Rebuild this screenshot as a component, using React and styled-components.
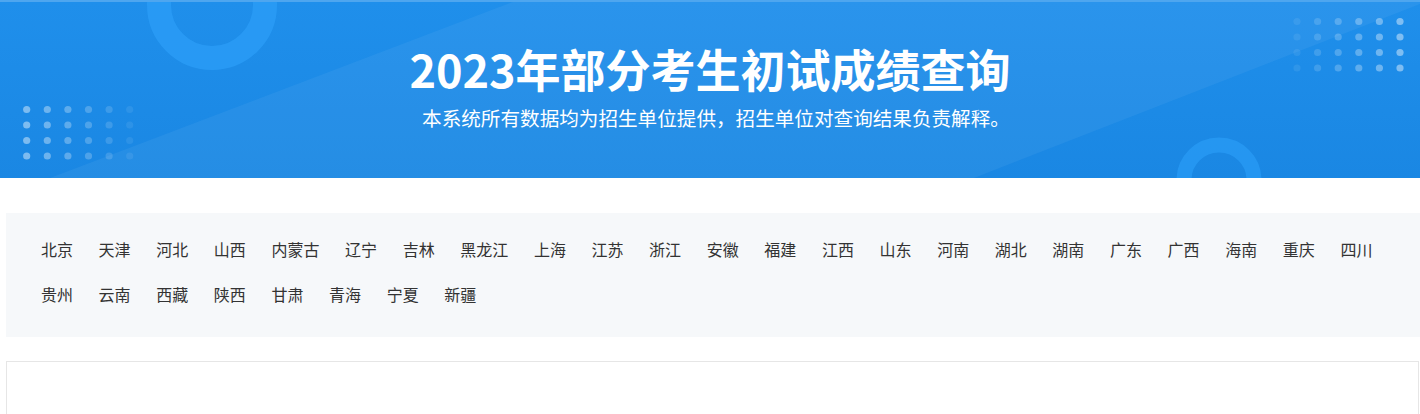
import React from 'react';
import styled, { createGlobalStyle } from 'styled-components';

const GlobalStyle = createGlobalStyle`
  body {
    margin: 0;
    background: #ffffff;
    font-family: "Microsoft YaHei", "Noto Sans CJK SC", "Noto Sans", sans-serif;
  }
`;

const provinces = [
  '北京', '天津', '河北', '山西', '内蒙古', '辽宁', '吉林', '黑龙江',
  '上海', '江苏', '浙江', '安徽', '福建', '江西', '山东', '河南',
  '湖北', '湖南', '广东', '广西', '海南', '重庆', '四川', '贵州',
  '云南', '西藏', '陕西', '甘肃', '青海', '宁夏', '新疆',
];

const Banner = styled.header`
  position: relative;
  height: 178px;
  overflow: hidden;
  background: linear-gradient(180deg, #1f8feb 0%, #1a87e3 100%);
  border-top: 2px solid #4ea6ef;
  box-sizing: border-box;
  display: flex;
  flex-direction: column;
  align-items: center;
  color: #ffffff;
`;

const Decor = styled.svg`
  position: absolute;
  inset: 0;
  width: 100%;
  height: 100%;
`;

const Title = styled.h1`
  position: relative;
  margin: 42px 0 0;
  font-size: 45px;
  line-height: 50px;
  font-weight: 700;
`;

const Subtitle = styled.p`
  position: relative;
  margin: 12px 0 0 12px;
  font-size: 19.6px;
  line-height: 24px;
`;

const RegionPanel = styled.nav`
  margin: 35px 0 0 6px;
  padding: 14px 10px 20px 35px;
  background: #f6f8fa;
`;

const RegionList = styled.ul`
  list-style: none;
  margin: 0;
  padding: 0;
  display: flex;
  flex-wrap: wrap;
`;

const RegionItem = styled.li`
  margin-right: 25.6px;
  font-size: 16px;
  line-height: 45px;
  color: #333333;
  cursor: pointer;
`;

const ResultBox = styled.section`
  margin: 24px 1px 0 6px;
  height: 120px;
  border: 1px solid #e6e6e6;
  background: #ffffff;
`;

function Dots({ x, y, fadeLeft }) {
  const dots = [];
  for (let r = 0; r < 4; r++) {
    for (let c = 0; c < 6; c++) {
      const k = fadeLeft ? c : 5 - c;
      dots.push(
        <circle
          key={`${r}-${c}`}
          cx={x + c * 20.6}
          cy={y + r * 15.5}
          r="3.6"
          fill="#ffffff"
          opacity={0.08 + k * 0.07}
        />
      );
    }
  }
  return <g>{dots}</g>;
}

export default function App() {
  return (
    <>
      <GlobalStyle />
      <Banner>
        <Decor viewBox="0 0 1420 176" preserveAspectRatio="none">
          <polygon points="50,176 518,-2 1430,-2 974,176" fill="#ffffff" opacity="0.05" />
          <circle cx="212" cy="3" r="53" fill="none" stroke="#2a9cf6" strokeWidth="24" opacity="0.8" />
          <circle cx="1219" cy="178" r="35" fill="none" stroke="#2a9cf6" strokeWidth="15" opacity="0.7" />
          <Dots x={26.7} y={107.5} />
          <Dots x={1297} y={19.5} fadeLeft />
        </Decor>
        <Title>2023年部分考生初试成绩查询</Title>
        <Subtitle>本系统所有数据均为招生单位提供，招生单位对查询结果负责解释。</Subtitle>
      </Banner>
      <RegionPanel>
        <RegionList>
          {provinces.map((p) => (
            <RegionItem key={p}>{p}</RegionItem>
          ))}
        </RegionList>
      </RegionPanel>
      <ResultBox />
    </>
  );
}
